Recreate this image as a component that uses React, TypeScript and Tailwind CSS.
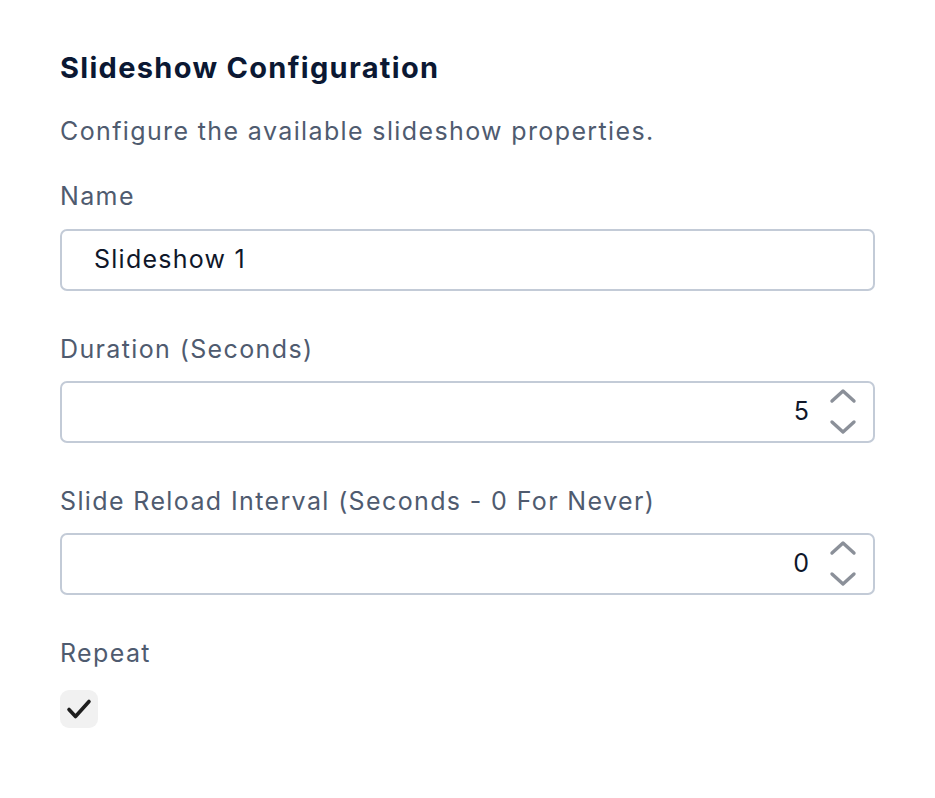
import { useState } from "react";

type NumberFieldProps = {
  label: string;
  value: number;
};

function Spinner() {
  return (
    <svg width="28" height="48" viewBox="0 0 28 48" fill="none" aria-hidden>
      <path d="M3 13 L14 3 L25 13" stroke="#8b9099" strokeWidth="3.4" strokeLinecap="round" strokeLinejoin="round" />
      <path d="M3 34 L14 44 L25 34" stroke="#8b9099" strokeWidth="3.4" strokeLinecap="round" strokeLinejoin="round" />
    </svg>
  );
}

function NumberField({ label, value }: NumberFieldProps) {
  return (
    <div className="flex flex-col">
      <label className="text-[25px] leading-[36px] tracking-[0.055em] text-[#4f5b6f]">{label}</label>
      <div className="mt-[14px] flex h-[62px] items-center rounded-[7px] border-2 border-[#c3cbd7] pl-[34px] pr-[16px]">
        <span className="flex-1 text-right text-[25px] text-[#0f172a]">{value}</span>
        <div className="ml-[20px] flex items-center">
          <Spinner />
        </div>
      </div>
    </div>
  );
}

export default function App() {
  const [repeat, setRepeat] = useState(true);

  return (
    <div className="min-h-[798px] bg-white px-[60px] pt-[47px] font-['Inter',sans-serif]">
      <h2 className="text-[29px] font-bold leading-[42px] tracking-[0.045em] text-[#0b1833]">Slideshow Configuration</h2>
      <p className="mt-[24px] text-[25px] leading-[36px] tracking-[0.055em] text-[#4f5b6f]">
        Configure the available slideshow properties.
      </p>

      <div className="mt-[29px] flex flex-col">
        <label className="text-[25px] leading-[36px] tracking-[0.055em] text-[#4f5b6f]">Name</label>
        <div className="mt-[15px] flex h-[62px] items-center rounded-[7px] border-2 border-[#c3cbd7] pl-[32px] pr-[16px]">
          <span className="text-[25px] tracking-[0.05em] text-[#0f172a]">Slideshow 1</span>
        </div>
      </div>

      <div className="mt-[40px]">
        <NumberField label="Duration (Seconds)" value={5} />
      </div>

      <div className="mt-[40px]">
        <NumberField label="Slide Reload Interval (Seconds - 0 For Never)" value={0} />
      </div>

      <div className="mt-[40px] flex flex-col">
        <label className="text-[25px] leading-[36px] tracking-[0.055em] text-[#4f5b6f]">Repeat</label>
        <button
          type="button"
          onClick={() => setRepeat(!repeat)}
          className="mt-[19px] flex h-[38px] w-[38px] items-center justify-center rounded-[9px] bg-[#f1f1f1]"
        >
          {repeat && (
            <svg width="26" height="22" viewBox="0 0 26 22" fill="none" aria-hidden>
              <path d="M3 11.5 L9.5 18.5 L23 3.5" stroke="#1e1e1e" strokeWidth="3.6" strokeLinecap="round" strokeLinejoin="round" />
            </svg>
          )}
        </button>
      </div>
    </div>
  );
}
